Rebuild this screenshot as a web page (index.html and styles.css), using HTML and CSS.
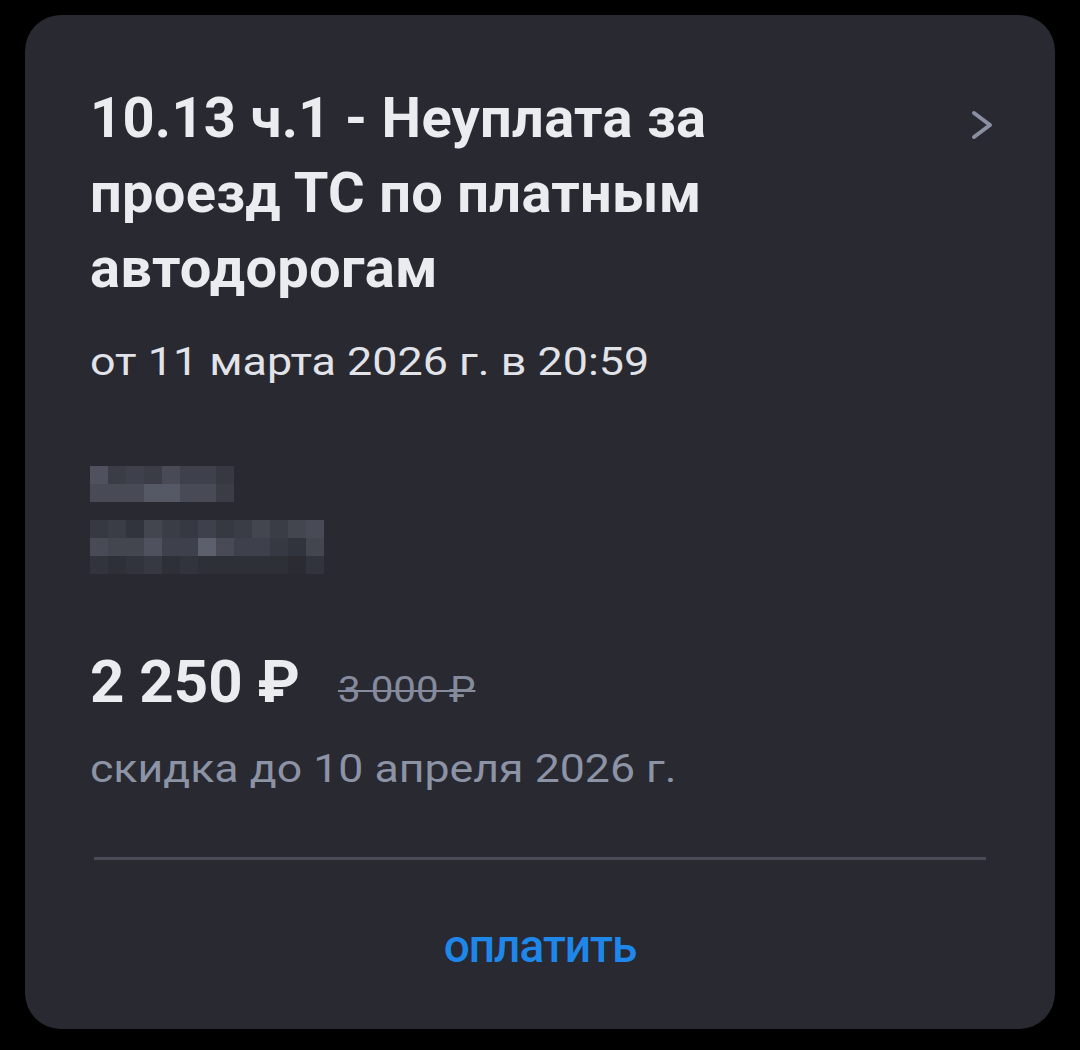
FILE: index.html
```html
<!DOCTYPE html>
<html lang="ru">
<head>
<meta charset="utf-8">
<title>Штраф</title>
<link rel="stylesheet" href="styles.css">
</head>
<body>
<div class="card">
  <div class="header">
    <div class="title">10.13 ч.1 - Неуплата за проезд ТС по платным автодорогам</div>
    <svg class="chevron" width="30" height="40" viewBox="0 0 30 40" aria-hidden="true">
      <path d="M8 8 L24 20 L8 32" fill="none" stroke="#8a90a2" stroke-width="4" stroke-linecap="round" stroke-linejoin="round"/>
    </svg>
  </div>
  <div class="date"><span class="wide">от 11 марта 2026 г. в 20:59</span></div>

  <div class="blur">
    <div class="pix pix-a">
      <i class="c7"></i><i class="c3"></i><i class="c4"></i><i class="c3"></i><i class="c6"></i><i class="c4"></i><i class="c4"></i><i class="c2"></i>
      <i class="c6"></i><i class="c6"></i><i class="c6"></i><i class="c8"></i><i class="c8"></i><i class="c6"></i><i class="c6"></i><i class="c3"></i>
    </div>
    <div class="pix pix-b">
      <i class="c2"></i><i class="c3"></i><i class="c1"></i><i class="c5"></i><i class="c3"></i><i class="c2"></i><i class="c4"></i><i class="c2"></i><i class="c3"></i><i class="c5"></i><i class="c3"></i><i class="c5"></i><i class="c6"></i>
      <i class="c6"></i><i class="c5"></i><i class="c5"></i><i class="c7"></i><i class="c4"></i><i class="c4"></i><i class="c9"></i><i class="c6"></i><i class="c4"></i><i class="c4"></i><i class="c2"></i><i class="c1"></i><i class="c5"></i>
      <i class="c1"></i><i class="c0"></i><i class="c1"></i><i class="c2"></i><i class="c0"></i><i class="c1"></i><i class="c0"></i><i class="c0"></i><i class="c0"></i><i class="c0"></i><i class="c0"></i><i class="cx"></i><i class="c1"></i>
    </div>
  </div>

  <div class="prices">
    <span class="price">2 250 ₽</span>
    <span class="old">3 000 ₽</span>
  </div>
  <div class="discount"><span class="wide">скидка до 10 апреля 2026 г.</span></div>

  <div class="divider"></div>

  <div class="pay">оплатить</div>
</div>
</body>
</html>
```

FILE: styles.css
```css
* { box-sizing: border-box; }

html, body {
  margin: 0;
  padding: 0;
  background: #000;
}

body {
  width: 1080px;
  height: 1050px;
  padding: 15px 25px 0 25px;
  font-family: Roboto, "Noto Sans", sans-serif;
}

.card {
  width: 1030px;
  height: 1014px;
  background: #282931;
  border-radius: 36px;
  padding: 66px 65px 0 65px;
  display: flex;
  flex-direction: column;
}

.header {
  display: flex;
  justify-content: space-between;
  align-items: flex-start;
}

.title {
  width: 720px;
  font-size: 56px;
  line-height: 75px;
  font-weight: 700;
  letter-spacing: 0.3px;
  color: #ebecf0;
}

.chevron {
  margin-top: 24px;
  margin-right: -6px;
  flex: none;
}

.wide {
  display: inline-block;
  transform-origin: 0 50%;
}

.date {
  margin-top: 31px;
  font-size: 38px;
  line-height: 50px;
  color: #e2e3e8;
}

.date .wide { transform: scaleX(1.18); }

.blur {
  margin-top: 79px;
  display: flex;
  flex-direction: column;
  gap: 18px;
}

.pix {
  display: grid;
  grid-auto-rows: 18px;
}

.pix i {
  display: block;
  width: 18px;
  height: 18px;
}

.pix-a { grid-template-columns: repeat(8, 18px); }
.pix-b { grid-template-columns: repeat(13, 18px); }

.c0 { background: #2e3038; }
.c1 { background: #32343d; }
.c2 { background: #363842; }
.c3 { background: #3a3c46; }
.c4 { background: #3e404b; }
.c5 { background: #43454f; }
.c6 { background: #484b56; }
.c7 { background: #4f525e; }
.c8 { background: #555865; }
.c9 { background: #5c606d; }
.cx { background: #2a2b33; }

.prices {
  margin-top: 73px;
  display: flex;
  align-items: baseline;
  gap: 38px;
  line-height: 70px;
}

.price {
  font-size: 60px;
  font-weight: 700;
  color: #ebecf0;
}

.old {
  display: inline-block;
  font-size: 36px;
  color: #858b9c;
  text-decoration: line-through;
  text-decoration-thickness: 2px;
  transform: scaleX(1.12);
  transform-origin: 0 50%;
}

.discount {
  margin-top: 19px;
  font-size: 38px;
  line-height: 50px;
  color: #8c93a5;
}

.discount .wide { transform: scaleX(1.175); }

.divider {
  margin: 63px 4px 0 4px;
  height: 3px;
  background: #484a55;
}

.pay {
  margin-top: 56px;
  text-align: center;
  font-size: 46px;
  line-height: 60px;
  font-weight: 500;
  letter-spacing: -1px;
  color: #1f87ea;
}
```
